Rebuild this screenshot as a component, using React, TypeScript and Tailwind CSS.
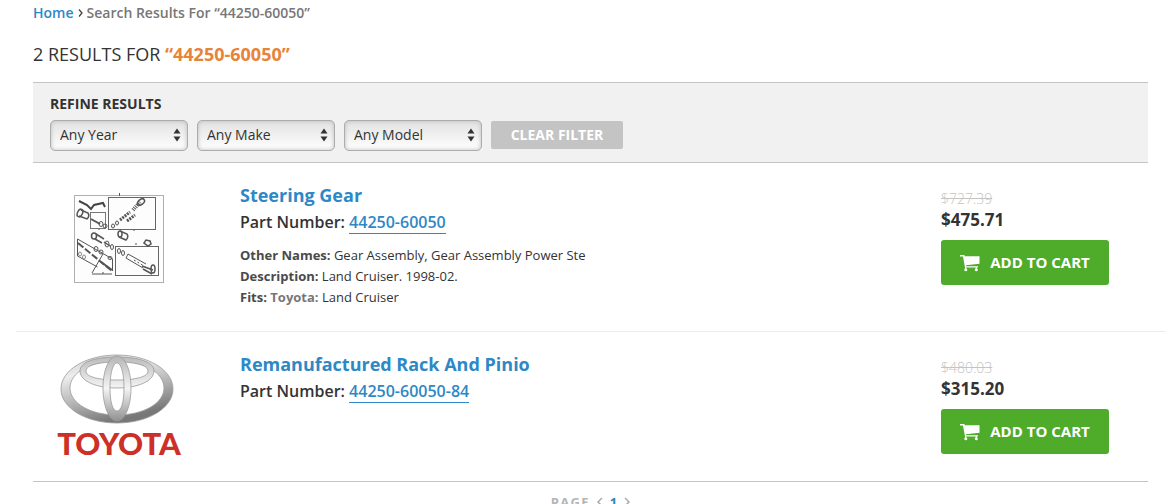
import React, { useState } from "react";

type Part = {
  name: string;
  partNumber: string;
  listPrice: string;
  price: string;
  otherNames?: string;
  description?: string;
  fits?: { make: string; model: string };
};

const QUERY = "“44250-60050”";

const parts: Part[] = [
  {
    name: "Steering Gear",
    partNumber: "44250-60050",
    listPrice: "$727.39",
    price: "$475.71",
    otherNames: "Gear Assembly, Gear Assembly Power Ste",
    description: "Land Cruiser. 1998-02.",
    fits: { make: "Toyota:", model: "Land Cruiser" },
  },
  {
    name: "Remanufactured Rack And Pinio",
    partNumber: "44250-60050-84",
    listPrice: "$480.03",
    price: "$315.20",
  },
];

const PartDiagram = () => (
  <div className="pt-[10px]">
    <svg viewBox="0 0 90 90" width="90" height="90" fill="none" stroke="#555" strokeWidth="1">
      <rect x="0.5" y="2.5" width="89" height="87" fill="#fdfdfd" stroke="#b0b0b0" />
      <path d="M45.500 0v3M25 35v2M60 36v2M62 50v2M29 79v2" />
      <rect x="34.500" y="4.500" width="47" height="32" stroke="#666" />
      <rect x="16.500" y="19.500" width="15" height="16" stroke="#777" />
      <rect x="41.500" y="53.500" width="43" height="29" stroke="#666" />
      {/* hoses */}
      <path d="M5 8l8 4 4 4 3-4 9-2 2 4" stroke="#444" strokeWidth="2" />
      <path d="M17 26l9 5" stroke="#555" strokeWidth="2" />
      <g stroke="#555">
        <ellipse cx="6" cy="20" rx="2.500" ry="4" transform="rotate(25 6 20)" strokeWidth="1.500" />
        <path d="M7 17l7 3q2 3-1 6l-8-3" strokeWidth="1.500" />
        <ellipse cx="27" cy="31" rx="2" ry="2.500" />
        <ellipse cx="31" cy="33" rx="2" ry="2" />
        <ellipse cx="39" cy="33" rx="1.500" ry="2" />
        <ellipse cx="43" cy="30" rx="1.500" ry="2" />
        <path d="M46 27l10-8M53 28l8-6" strokeWidth="3" strokeDasharray="2 1" />
        <path d="M59 17l7-8" strokeWidth="4" strokeDasharray="1 1" />
        <ellipse cx="67" cy="9" rx="4" ry="2.500" transform="rotate(-40 67 9)" strokeWidth="1.500" />
        <ellipse cx="46" cy="41" rx="2" ry="3" strokeWidth="1.500" />
        <path d="M46 38l7 3q2 3-1 6l-7-3" strokeWidth="1.500" />
        <path d="M70 50l2-3 4 1 1 3-3 2z" strokeWidth="1.500" />
        <ellipse cx="20" cy="43" rx="2.500" ry="3" strokeWidth="1.500" />
        <path d="M22 41l8 5M21 46l7 4M30 49l6 4" strokeWidth="1.500" />
        <ellipse cx="33" cy="51" rx="2" ry="3" />
        <ellipse cx="38" cy="54" rx="1.500" ry="2.500" />
        <path d="M3.500 46v17l20 11M3.500 46l35 20v12" />
        <path d="M4 50l34 28" strokeWidth="2" strokeDasharray="7 2" />
        <path d="M18 80l11-19M18 81h20" />
        <path d="M27 69l11 8" strokeWidth="2" />
        <ellipse cx="22" cy="56" rx="2" ry="2.500" />
        <ellipse cx="27" cy="59" rx="2" ry="2" />
        <ellipse cx="6" cy="61" rx="1.500" ry="2" stroke="#888" />
        <ellipse cx="10" cy="64" rx="1.500" ry="2" stroke="#888" />
        <ellipse cx="36" cy="65" rx="2" ry="1.500" />
        <ellipse cx="45" cy="58" rx="1.500" ry="2.500" />
        <ellipse cx="49" cy="60" rx="1.500" ry="2.500" />
        <path d="M54 61l18 10M52 65l17 10M54 61l-2 4" />
        <path d="M60 67l10 6" strokeDasharray="2 2" />
        <path d="M68 73l11 4M69 76l9 5" strokeWidth="1.500" />
        <ellipse cx="79" cy="76" rx="2" ry="4" strokeWidth="1.500" />
      </g>
    </svg>
  </div>
);

const ToyotaLogo = () => (
  <div className="flex flex-col items-center pt-px">
    <svg viewBox="0 0 114 72" width="114" height="72" fill="none" className="mr-1">
      <defs>
        <linearGradient id="outer" x1="0" y1="0" x2="0.400" y2="1">
          <stop offset="0" stopColor="#c9c9c9" />
          <stop offset="0.300" stopColor="#ededed" />
          <stop offset="0.600" stopColor="#bdbdbd" />
          <stop offset="1" stopColor="#777" />
        </linearGradient>
        <linearGradient id="inner" x1="0" y1="0" x2="0" y2="1">
          <stop offset="0" stopColor="#b5b5b5" />
          <stop offset="0.500" stopColor="#f4f4f4" />
          <stop offset="1" stopColor="#909090" />
        </linearGradient>
        <linearGradient id="bar" x1="0" y1="0" x2="0" y2="1">
          <stop offset="0" stopColor="#bbb" />
          <stop offset="1" stopColor="#f4f4f4" />
        </linearGradient>
      </defs>
      <g fillRule="evenodd" stroke="#999" strokeWidth="0.800">
        <path
          fill="url(#outer)"
          d="M57 2C26 2 1 17 1 36s25 34 56 34 56-15 56-34S88 2 57 2zm0 6c28 0 47 12 47 27S84 62 57 62 10 50 10 35 29 8 57 8z"
        />
        <path
          fill="url(#bar)"
          d="M57 4c-22 0-37 5-37 14 0 10 16 17 37 17s37-7 37-17C94 9 79 4 57 4zm0 5c18 0 31 3 31 9s-13 9-31 9-31-3-31-9 13-9 31-9z"
        />
        <path
          fill="url(#inner)"
          d="M57 3c-8 0-14 14-14 32s6 33 14 33 14-15 14-33S65 3 57 3zm0 7c4 0 7 10 7 25s-3 23-7 23-7-8-7-23 3-25 7-25z"
        />
      </g>
    </svg>
    <span className="font-[Lato,sans-serif] text-[31px] leading-9 font-black text-[#cc3028]">
      TOYOTA
    </span>
  </div>
);

const CartIcon = () => (
  <svg viewBox="0 0 20 18" width="20" height="18" fill="#fff">
    <path d="M0 1h4.300l.5 1.300H19.500v7.500L6 11.300l.2 1H18v1.200H5L3 2.400H0z" />
    <path d="M5 13h1.200v2H5zM15.700 13h1.200v2h-1.200z" />
    <circle cx="5.800" cy="15.800" r="1.500" />
    <circle cx="16.300" cy="15.800" r="1.500" />
  </svg>
);

const FilterSelect = ({ label }: { label: string }) => (
  <div className="relative w-[138px]">
    <select
      aria-label={label}
      className="block h-[31px] w-full appearance-none rounded-[5px] border border-[#acacac] bg-linear-to-b from-[#e2e2e2] to-white pb-[2px] pl-[9px] text-sm text-[#333] shadow-[inset_0_0_4px_#bbb]"
    >
      <option>{label}</option>
    </select>
    <svg
      viewBox="0 0 8 14"
      width="8"
      height="14"
      fill="#333"
      className="pointer-events-none absolute top-2 right-[7px]"
    >
      <path d="M4 0.500l3.500 5h-7zM4 13.500l3.500-5h-7z" />
    </svg>
  </div>
);

const PartRow = ({ part, children }: { part: Part; children: React.ReactNode }) => (
  <div className="flex pr-[57px] pl-[17px]">
    <div className="flex w-[172px] shrink-0 justify-center">{children}</div>
    <div className="min-w-0 flex-1 pl-[35px]">
      <h2 className="text-lg leading-6 font-bold">
        <a href="#" className="text-[#2d88c6]">
          {part.name}
        </a>
      </h2>
      <p className="pt-px text-base leading-7 font-semibold text-[#333]">
        Part Number:{" "}
        <a href="#" className="border-b border-[#2d88c6] text-[#2d88c6]">
          {part.partNumber}
        </a>
      </p>
      {part.fits && (
        <div className="pt-[9px] text-[13px] leading-[21px] text-[#333]">
          <p>
            <b className="text-[#4a4a4a]">Other Names:</b> {part.otherNames}
          </p>
          <p>
            <b className="text-[#4a4a4a]">Description:</b> {part.description}
          </p>
          <p>
            <b className="text-[#4a4a4a]">Fits:</b>{" "}
            <b className="text-[#777]">{part.fits.make}</b> {part.fits.model}
          </p>
        </div>
      )}
    </div>
    <div className="w-[168px] shrink-0 pt-[6px]">
      <p className="text-sm leading-5 font-light text-[#c4c4c4] line-through">{part.listPrice}</p>
      <p className="text-[17px] leading-[22px] font-bold text-[#333]">{part.price}</p>
      <button className="mt-[9px] flex h-[45px] w-full items-center justify-center gap-[10px] rounded-[3px] bg-[#4fab2a] text-[15px] font-bold text-white">
        <CartIcon />
        ADD TO CART
      </button>
    </div>
  </div>
);

export default function App() {
  const [page] = useState(1);

  return (
    <div className="h-screen overflow-hidden bg-white pr-[10px] pl-4 font-['Open_Sans',sans-serif]">
      <div className="pr-[18px] pl-[17px]">
        <nav className="flex items-center gap-1 pt-[3px] text-sm leading-5 font-semibold text-[#777]">
          <a href="#" className="text-[#2d88c6]">
            Home
          </a>
          <svg viewBox="0 0 5 8" width="5" height="8" fill="none" stroke="#444" strokeWidth="1.300">
            <path d="M1 0.500L4 4 1 7.500" />
          </svg>
          <span>Search Results For {QUERY}</span>
        </nav>
        <h1 className="pt-[19px] text-lg leading-6 font-medium text-[#333]">
          2 RESULTS FOR <span className="font-bold text-[#e8833a]">{QUERY}</span>
        </h1>
        <section className="mt-4 border-y border-[#c4c4c4] bg-[#f1f1f1] px-[17px] py-[11px]">
          <h3 className="text-sm leading-5 font-bold text-[#333]">REFINE RESULTS</h3>
          <div className="flex items-start gap-[9px] pt-[6px]">
            <FilterSelect label="Any Year" />
            <FilterSelect label="Any Make" />
            <FilterSelect label="Any Model" />
            <button className="mt-px h-7 w-[132px] rounded-[2px] bg-[#c4c4c4] text-sm font-bold text-white">
              CLEAR FILTER
            </button>
          </div>
        </section>
      </div>

      <div className="border-b border-[#ececec] pt-5 pb-[23px]">
        <PartRow part={parts[0]}>
          <PartDiagram />
        </PartRow>
      </div>
      <div className="py-5">
        <PartRow part={parts[1]}>
          <ToyotaLogo />
        </PartRow>
      </div>

      <div className="pr-[18px] pl-[17px]">
        <div className="flex items-center justify-center gap-[7px] border-t border-[#c4c4c4] pt-[10px] text-[13px] leading-5 font-bold text-[#b5b5b5]">
          <span className="tracking-widest">PAGE</span>
          <svg viewBox="0 0 6 10" width="6" height="10" fill="none" stroke="#aaa" strokeWidth="1.500">
            <path d="M5 1L1 5l4 4" />
          </svg>
          <a href="#" className="text-[#2d88c6]">
            {page}
          </a>
          <svg viewBox="0 0 6 10" width="6" height="10" fill="none" stroke="#aaa" strokeWidth="1.500">
            <path d="M1 1l4 4-4 4" />
          </svg>
        </div>
      </div>
    </div>
  );
}
